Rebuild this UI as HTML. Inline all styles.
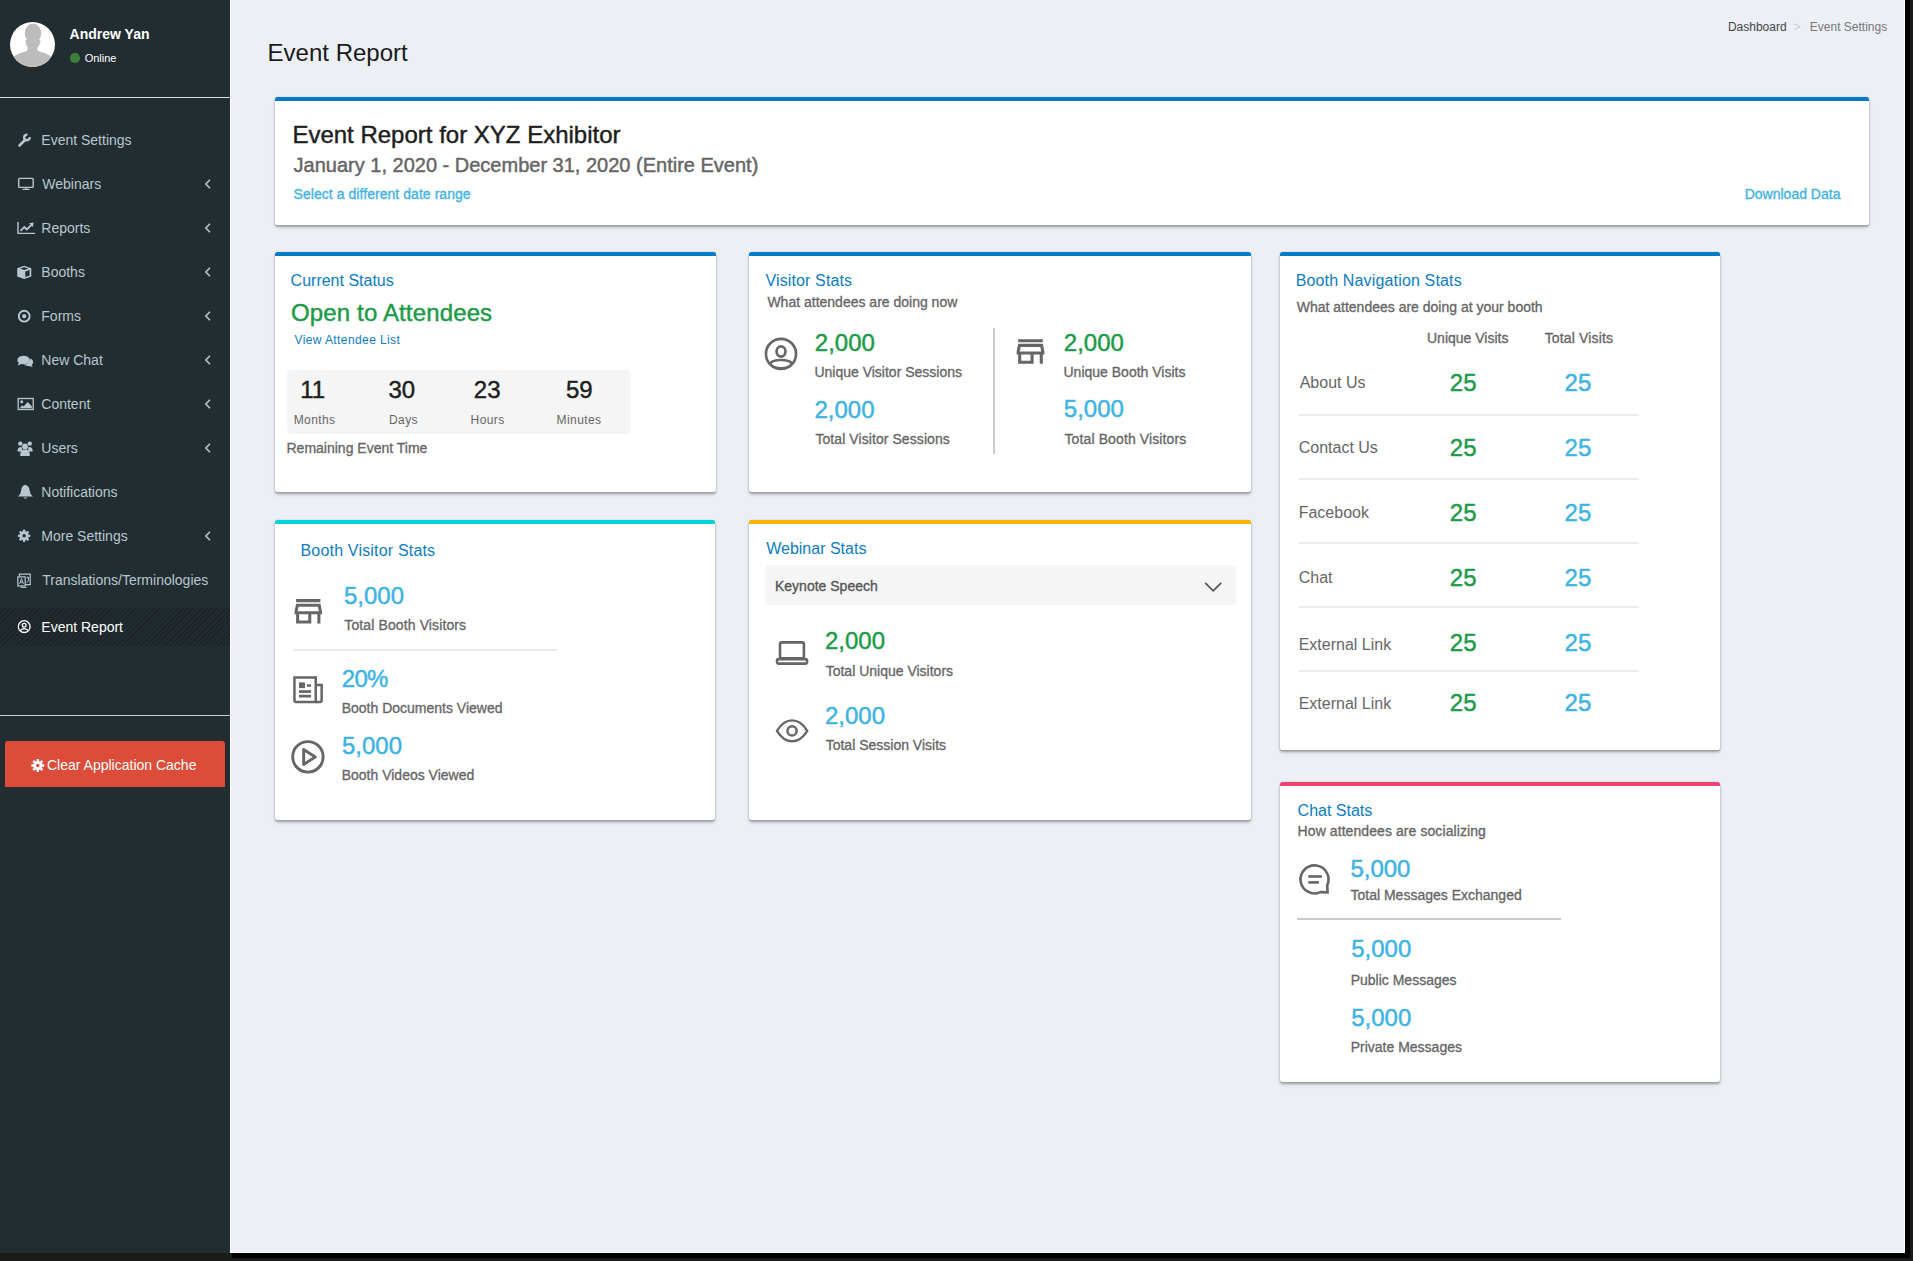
<!DOCTYPE html><html><head><meta charset="utf-8"><title>Event Report</title><style>
html,body{margin:0;padding:0;}
body{width:1913px;height:1261px;overflow:hidden;position:relative;background:#ecf0f5;font-family:"Liberation Sans", sans-serif;}
.t{position:absolute;line-height:1;white-space:nowrap;}
.card{position:absolute;box-sizing:border-box;background:#fff;border-top:4px solid #007bc7;border-radius:2.5px;box-shadow:0 2px 2px rgba(0,0,0,.24),0 3px 4px rgba(0,0,0,.10),0 0 2px rgba(0,0,0,.16);}
.sb{position:absolute;left:0;top:0;width:230px;height:1253px;background:#222d32;}
.ln{position:absolute;}
</style></head><body>
<div class="sb"></div>
<div class="ln" style="left:0;top:97px;width:230px;height:1px;background:#d9dcde"></div>
<div class="ln" style="left:0;top:608px;width:230px;height:38px;background:repeating-linear-gradient(135deg,#1b2327 0 1.2px,#222b30 1.2px 3.4px)"></div>
<div class="ln" style="left:0;top:715px;width:230px;height:1px;background:#c9cbcd"></div>
<div class="ln" style="left:5px;top:741px;width:220px;height:46px;background:#dd4b39;border-radius:3px 3px 0 0"></div>
<div class="ln" style="left:230px;top:0;width:1px;height:1253px;background:#ffffff"></div>
<div class="ln" style="left:230px;top:1252px;width:1675px;height:1px;background:#ffffff"></div>
<div class="ln" style="left:1904px;top:0;width:1px;height:1253px;background:#ffffff"></div>
<div class="ln" style="left:1905px;top:0;width:8px;height:1261px;background:#1a1a1a"></div>
<div class="ln" style="left:1905px;top:0;width:5px;height:1258px;background:#000"></div>
<div class="ln" style="left:0;top:1253px;width:1913px;height:8px;background:#1a1a1a"></div>
<div class="ln" style="left:232px;top:1253px;width:1678px;height:5px;background:#000"></div>
<svg style="position:absolute;left:10px;top:22px;width:45px;height:45px" viewBox="0 0 45 45"><defs><clipPath id="av"><circle cx="22.5" cy="22.5" r="22.5"/></clipPath></defs><circle cx="22.5" cy="22.5" r="22.5" fill="#ffffff"/><g clip-path="url(#av)" fill="#bcbcbc"><ellipse cx="23" cy="11.5" rx="8.2" ry="10"/><path d="M15.5 18 Q16 24 18 26 L17 29 Q8 31 3 35 L0 45 L45 45 L42 35 Q37 31 28 29 L27 26 Q30 24 30.5 18 Z"/></g></svg>
<div class="ln" style="left:70px;top:53px;width:9.5px;height:9.5px;border-radius:50%;background:#3d7e3d"></div>
<svg style="position:absolute;left:16px;top:132px;width:18px;height:16px;overflow:visible" viewBox="0 0 18 16"><g fill="none" stroke="#b8c7ce"><line x1="3.5" y1="13.5" x2="9" y2="8" stroke-width="2.6" stroke-linecap="round"/><path d="M13.7 5.1 A2.8 2.8 0 1 1 11.4 2.7" stroke-width="2.4"/></g></svg>
<svg style="position:absolute;left:16px;top:176px;width:20px;height:16px;overflow:visible" viewBox="0 0 20 16"><g fill="none" stroke="#b8c7ce"><rect x="2.7" y="2.4" width="14.5" height="9" rx="0.8" stroke-width="1.4"/><line x1="10" y1="11.5" x2="10" y2="13" stroke-width="1.2"/><line x1="6.5" y1="13.4" x2="13.6" y2="13.4" stroke-width="1.2"/></g></svg>
<svg style="position:absolute;left:16px;top:221px;width:20px;height:14px;overflow:visible" viewBox="0 0 20 14"><g fill="none" stroke="#b8c7ce" stroke-width="1.4"><polyline points="2,1 2,12.4 19,12.4"/><polyline points="4.5,9.8 8.3,6 10.8,8.5 16.2,3.2" stroke-width="1.8"/></g><path d="M13 2.3 L17.6 1.6 L17 6.1 Z" fill="#b8c7ce"/></svg>
<svg style="position:absolute;left:16px;top:265px;width:17px;height:15px;overflow:visible" viewBox="0 0 17 15"><path d="M8.2 0.8 L15.3 3.3 L15.3 11.4 L8.2 13.9 L1.2 11.4 L1.2 3.3 Z" fill="#b8c7ce"/><path d="M4.2 3.6 L8.2 2.2 L12.3 3.6 L8.2 5 Z" fill="#222d32"/><path d="M9.3 6.5 L13.6 5 L13.6 10.6 L9.3 12.1 Z" fill="#222d32"/></svg>
<svg style="position:absolute;left:16px;top:309.7px;width:17px;height:13px;overflow:visible" viewBox="0 0 17 13"><circle cx="8.2" cy="6.2" r="5.4" fill="none" stroke="#b8c7ce" stroke-width="1.9"/><circle cx="8.2" cy="6.2" r="2.1" fill="#b8c7ce"/></svg>
<svg style="position:absolute;left:16px;top:354.7px;width:18px;height:13px;overflow:visible" viewBox="0 0 18 13"><ellipse cx="7.6" cy="5" rx="6.3" ry="4.3" fill="#b8c7ce"/><path d="M3 7.5 L1.6 10.5 L6 8.8Z" fill="#b8c7ce"/><path d="M14.4 3.6 Q17.4 5 17.1 7.6 Q16.9 9.4 15.6 10.2 L16.8 12 L12.6 10.9 Q9.6 11 7.6 9.8 Q13 9.6 14.4 3.6Z" fill="#b8c7ce"/></svg>
<svg style="position:absolute;left:16px;top:397px;width:20px;height:14px;overflow:visible" viewBox="0 0 20 14"><rect x="2.2" y="1.5" width="15" height="11" fill="none" stroke="#b8c7ce" stroke-width="1.3"/><circle cx="5.7" cy="4.8" r="1.5" fill="#b8c7ce"/><path d="M3.5 11.2 L6.4 8.2 L7.6 9.4 L11.6 5 L15.8 9.2 L15.8 11.2Z" fill="#b8c7ce"/></svg>
<svg style="position:absolute;left:16px;top:440.5px;width:18px;height:15px;overflow:visible" viewBox="0 0 18 15"><g fill="#b8c7ce"><circle cx="4.3" cy="2.6" r="2.2"/><circle cx="13.8" cy="2.6" r="2.2"/><circle cx="9" cy="5.4" r="2.9"/><path d="M1.5 10.5 Q1.5 6.8 3.6 6.2 L6.3 6.2 Q5.6 8 6 10.5Z"/><path d="M16.7 10.5 Q16.7 6.8 14.6 6.2 L11.9 6.2 Q12.6 8 12.2 10.5Z"/><path d="M4.2 15 Q4.2 9 7 8.6 L11 8.6 Q13.8 9 13.8 15Z"/></g></svg>
<svg style="position:absolute;left:17px;top:484.3px;width:17px;height:15px;overflow:visible" viewBox="0 0 17 15"><path d="M8 0.8 Q12 1.6 12.6 6.2 Q12.8 10 15.9 12.6 L0.9 12.6 Q4 10 4.2 6.2 Q4.8 1.6 8 0.8Z M6.4 13.4 Q8.4 15.8 10.4 13.4Z" fill="#b8c7ce"/></svg>
<svg style="position:absolute;left:16px;top:529.1px;width:16px;height:14px;overflow:visible" viewBox="0 0 16 14"><g fill="#b8c7ce"><rect x="6.95" y="0.6" width="2.3" height="12.4" rx="0.4" transform="rotate(0 8.1 6.8)"/><rect x="6.95" y="0.6" width="2.3" height="12.4" rx="0.4" transform="rotate(45 8.1 6.8)"/><rect x="6.95" y="0.6" width="2.3" height="12.4" rx="0.4" transform="rotate(90 8.1 6.8)"/><rect x="6.95" y="0.6" width="2.3" height="12.4" rx="0.4" transform="rotate(135 8.1 6.8)"/><circle cx="8.1" cy="6.8" r="4.7"/></g><circle cx="8.1" cy="6.8" r="1.7" fill="#222d32"/></svg>
<svg style="position:absolute;left:16px;top:572.5px;width:16px;height:15px;overflow:visible" viewBox="0 0 16 15"><g fill="none" stroke="#b8c7ce" stroke-width="1.2"><path d="M3.4 3.6 V1.2 H14.2 V11.6 H9"/><rect x="1.8" y="3.9" width="7.4" height="9"/><path d="M3.6 11 L5.5 5.6 L7.4 11 M4.3 9.2 H6.7" stroke-width="1"/><path d="M10.6 4.6 H13 M11.8 3.6 V4.6 M10.8 9.6 Q13 8 12.6 5" stroke-width="1"/><path d="M4.8 13.2 V14.4 H10.6" stroke-width="1"/></g></svg>
<svg style="position:absolute;left:16px;top:620.3px;width:17px;height:14px;overflow:visible" viewBox="0 0 17 14"><circle cx="8.2" cy="6.6" r="5.9" fill="none" stroke="#ffffff" stroke-width="1.3"/><circle cx="8.2" cy="5.2" r="1.9" fill="none" stroke="#ffffff" stroke-width="1.3"/><path d="M4.2 10.6 Q8.2 6.6 12.2 10.6" fill="none" stroke="#ffffff" stroke-width="1.3"/></svg>
<svg style="position:absolute;left:203px;top:178.3px;width:10px;height:12px" viewBox="0 0 10 12"><polyline points="7,1.8 2.8,6 7,10.2" fill="none" stroke="#b8c7ce" stroke-width="1.6"/></svg>
<svg style="position:absolute;left:203px;top:222.3px;width:10px;height:12px" viewBox="0 0 10 12"><polyline points="7,1.8 2.8,6 7,10.2" fill="none" stroke="#b8c7ce" stroke-width="1.6"/></svg>
<svg style="position:absolute;left:203px;top:266.3px;width:10px;height:12px" viewBox="0 0 10 12"><polyline points="7,1.8 2.8,6 7,10.2" fill="none" stroke="#b8c7ce" stroke-width="1.6"/></svg>
<svg style="position:absolute;left:203px;top:310.3px;width:10px;height:12px" viewBox="0 0 10 12"><polyline points="7,1.8 2.8,6 7,10.2" fill="none" stroke="#b8c7ce" stroke-width="1.6"/></svg>
<svg style="position:absolute;left:203px;top:354.3px;width:10px;height:12px" viewBox="0 0 10 12"><polyline points="7,1.8 2.8,6 7,10.2" fill="none" stroke="#b8c7ce" stroke-width="1.6"/></svg>
<svg style="position:absolute;left:203px;top:398.3px;width:10px;height:12px" viewBox="0 0 10 12"><polyline points="7,1.8 2.8,6 7,10.2" fill="none" stroke="#b8c7ce" stroke-width="1.6"/></svg>
<svg style="position:absolute;left:203px;top:442.3px;width:10px;height:12px" viewBox="0 0 10 12"><polyline points="7,1.8 2.8,6 7,10.2" fill="none" stroke="#b8c7ce" stroke-width="1.6"/></svg>
<svg style="position:absolute;left:203px;top:530.3px;width:10px;height:12px" viewBox="0 0 10 12"><polyline points="7,1.8 2.8,6 7,10.2" fill="none" stroke="#b8c7ce" stroke-width="1.6"/></svg>
<svg style="position:absolute;left:31px;top:758.5px;width:14px;height:13px" viewBox="0 0 14 13"><g fill="#fff"><rect x="5.6" y="0" width="2.4" height="13" rx="0.3" transform="rotate(0 6.8 6.5)"/><rect x="5.6" y="0" width="2.4" height="13" rx="0.3" transform="rotate(45 6.8 6.5)"/><rect x="5.6" y="0" width="2.4" height="13" rx="0.3" transform="rotate(90 6.8 6.5)"/><rect x="5.6" y="0" width="2.4" height="13" rx="0.3" transform="rotate(135 6.8 6.5)"/><circle cx="6.8" cy="6.5" r="4.6"/></g><circle cx="6.8" cy="6.5" r="1.7" fill="#dd4b39"/></svg>
<div class="card" style="left:275px;top:97px;width:1594px;height:128px;border-top-color:#007bc7"></div>
<div class="card" style="left:275px;top:252px;width:441px;height:240px;border-top-color:#007bc7"></div>
<div class="card" style="left:749px;top:252px;width:502px;height:240px;border-top-color:#007bc7"></div>
<div class="card" style="left:1280px;top:252px;width:440px;height:498px;border-top-color:#007bc7"></div>
<div class="card" style="left:275px;top:520px;width:440px;height:300px;border-top-color:#00d2df"></div>
<div class="card" style="left:749px;top:520px;width:502px;height:300px;border-top-color:#ffb300"></div>
<div class="card" style="left:1280px;top:782px;width:440px;height:300px;border-top-color:#ec4471"></div>
<div class="ln" style="left:287px;top:370px;width:344px;height:64px;background:#f5f5f5;border-radius:4px"></div>
<div class="ln" style="left:993px;top:328px;width:2px;height:126px;background:#c9cdd1"></div>
<div class="ln" style="left:1299px;top:414px;width:340px;height:2px;background:#ececec"></div>
<div class="ln" style="left:1299px;top:478px;width:340px;height:2px;background:#ececec"></div>
<div class="ln" style="left:1299px;top:542px;width:340px;height:2px;background:#ececec"></div>
<div class="ln" style="left:1299px;top:606px;width:340px;height:2px;background:#ececec"></div>
<div class="ln" style="left:1299px;top:670px;width:340px;height:2px;background:#ececec"></div>
<div class="ln" style="left:293px;top:649px;width:264px;height:2px;background:#ebeced"></div>
<div class="ln" style="left:1297px;top:918px;width:264px;height:2px;background:#c8cacd"></div>
<div class="ln" style="left:765px;top:565px;width:471px;height:40px;background:#f5f5f5;border-radius:4px"></div>
<svg style="position:absolute;left:1202px;top:578.8px;width:22px;height:16px" viewBox="0 0 22 16"><polyline points="3.2,3.8 11.2,11.8 19.2,3.8" fill="none" stroke="#555" stroke-width="1.75"/></svg>
<svg style="position:absolute;left:758px;top:332px;width:46px;height:46px" viewBox="0 0 46 46"><defs><clipPath id="acc"><circle cx="23" cy="21.9" r="15"/></clipPath></defs><g fill="none" stroke="#666666"><circle cx="23" cy="21.9" r="15.05" stroke-width="2.6"/><ellipse cx="23" cy="19.5" rx="4.45" ry="5.05" stroke-width="2.7"/><ellipse cx="23" cy="32.1" rx="10.9" ry="4.2" stroke-width="2.5" clip-path="url(#acc)"/></g></svg>
<svg style="position:absolute;left:1011.5px;top:333px;width:37px;height:37px;" viewBox="0 0 24 24" fill="#666666"><path d="M18.36 9l.6 3H5.04l.6-3h12.72M20 4H4v2h16V4zm0 3H4l-1 5v2h1v6h10v-6h4v6h2v-6h1v-2l-1-5zM6 18v-4h6v4H6z"/></svg>
<svg style="position:absolute;left:290px;top:593px;width:36.5px;height:36.5px;" viewBox="0 0 24 24" fill="#666666"><path d="M18.36 9l.6 3H5.04l.6-3h12.72M20 4H4v2h16V4zm0 3H4l-1 5v2h1v6h10v-6h4v6h2v-6h1v-2l-1-5zM6 18v-4h6v4H6z"/></svg>
<svg style="position:absolute;left:288px;top:737px;width:40px;height:40px" viewBox="0 0 40 40"><g fill="none" stroke="#666666"><circle cx="19.9" cy="19.85" r="15.25" stroke-width="2.9"/><path d="M15.65 12.45 L27.25 19.95 L15.65 27.45 Z" stroke-width="2.9" stroke-linejoin="round"/></g></svg>
<svg style="position:absolute;left:770px;top:710px;width:44px;height:40px" viewBox="0 0 44 40"><g fill="none" stroke="#666666"><path d="M6.9 20.85 C11 14.2 16 10.4 22.1 10.4 C28.2 10.4 33.2 14.2 37.3 20.85 C33.2 27.5 28.2 31.3 22.1 31.3 C16 31.3 11 27.5 6.9 20.85Z" stroke-width="2.4" stroke-linejoin="round"/><circle cx="22.05" cy="20.95" r="4.6" stroke-width="2.5"/></g></svg>
<svg style="position:absolute;left:770px;top:636px;width:45px;height:35px" viewBox="0 0 45 35"><g fill="none" stroke="#666666" stroke-width="2.6"><rect x="10" y="6.4" width="23.9" height="16" rx="1.8"/><rect x="7" y="23.1" width="30.1" height="4.5" rx="1.8"/></g></svg>
<svg style="position:absolute;left:1295px;top:860px;width:40px;height:40px" viewBox="0 0 40 40"><path d="M25.4 32.1 A14 14 0 1 1 32.2 25.3 L32.6 32.4 Z" fill="none" stroke="#666666" stroke-width="2.6" stroke-linejoin="miter"/><rect x="13.3" y="15.2" width="13.6" height="2.6" fill="#666666"/><rect x="13.3" y="21.1" width="10.6" height="2.6" fill="#666666"/></svg>
<svg style="position:absolute;left:290px;top:672px;width:36px;height:36px" viewBox="0 0 36 36"><g fill="none" stroke="#666666" stroke-width="2.5"><path d="M4.45 5.55 H25.75 V30.05 H6.2 Q4.45 30.05 4.45 28.3 Z"/><path d="M25.75 13.05 H31.65 V28.3 Q31.65 30.05 29.9 30.05 H25.75"/></g><g fill="#666666"><rect x="9" y="10.4" width="6" height="5.7"/><rect x="16.9" y="12.3" width="4.1" height="2.5"/><rect x="9" y="18.2" width="12.1" height="2.7"/><rect x="9" y="22.8" width="12.1" height="2.7"/></g></svg>
<div class="t" style="left:69.6px;top:26.8px;font-size:14px;font-weight:700;color:#ffffff;">Andrew Yan</div>
<div class="t" style="left:84.7px;top:52.8px;font-size:11px;color:#ffffff;">Online</div>
<div class="t" style="left:41.3px;top:133px;font-size:14px;color:#b8c7ce;">Event Settings</div>
<div class="t" style="left:42.3px;top:177px;font-size:14px;color:#b8c7ce;">Webinars</div>
<div class="t" style="left:41.3px;top:221px;font-size:14px;color:#b8c7ce;">Reports</div>
<div class="t" style="left:41.3px;top:265px;font-size:14px;color:#b8c7ce;">Booths</div>
<div class="t" style="left:41.3px;top:309px;font-size:14px;color:#b8c7ce;">Forms</div>
<div class="t" style="left:41.3px;top:353px;font-size:14px;color:#b8c7ce;">New Chat</div>
<div class="t" style="left:41.3px;top:397px;font-size:14px;color:#b8c7ce;">Content</div>
<div class="t" style="left:41.3px;top:441px;font-size:14px;color:#b8c7ce;">Users</div>
<div class="t" style="left:41.3px;top:485px;font-size:14px;color:#b8c7ce;">Notifications</div>
<div class="t" style="left:41.3px;top:529px;font-size:14px;color:#b8c7ce;">More Settings</div>
<div class="t" style="left:42.3px;top:573px;font-size:14px;color:#b8c7ce;">Translations/Terminologies</div>
<div class="t" style="left:41.3px;top:620px;font-size:14px;color:#ffffff;">Event Report</div>
<div class="t" style="left:47px;top:757.7px;font-size:14px;color:#ffffff;">Clear Application Cache</div>
<div class="t" style="left:1727.9px;top:20.8px;font-size:12px;color:#444444;">Dashboard</div>
<div class="t" style="left:1793.8px;top:20.8px;font-size:12px;color:#cccccc;">></div>
<div class="t" style="left:1809.8px;top:20.8px;font-size:12px;color:#777777;">Event Settings</div>
<div class="t" style="left:267.6px;top:41.1px;font-size:24px;color:#1a1a1a;">Event Report</div>
<div class="t" style="left:292.4px;top:123px;font-size:24px;-webkit-text-stroke:0.45px #1e1e1e;color:#1e1e1e;">Event Report for XYZ Exhibitor</div>
<div class="t" style="left:293.6px;top:155px;font-size:20px;-webkit-text-stroke:0.45px #666666;color:#666666;">January 1, 2020 - December 31, 2020 (Entire Event)</div>
<div class="t" style="left:293.6px;top:186.8px;font-size:14px;-webkit-text-stroke:0.32px #3cb3e4;color:#3cb3e4;letter-spacing:0.05px;">Select a different date range</div>
<div class="t" style="left:1744.7px;top:187.1px;font-size:14px;-webkit-text-stroke:0.32px #3cb3e4;color:#3cb3e4;">Download Data</div>
<div class="t" style="left:290.6px;top:272.8px;font-size:16px;color:#0b7dc2;">Current Status</div>
<div class="t" style="left:291px;top:300.9px;font-size:24px;-webkit-text-stroke:0.45px #1b9b47;color:#1b9b47;letter-spacing:0.144px;">Open to Attendees</div>
<div class="t" style="left:294.5px;top:334.1px;font-size:12px;color:#0b7dc2;letter-spacing:0.4px;">View Attendee List</div>
<div class="t" style="left:300.2px;top:378px;font-size:24px;-webkit-text-stroke:0.45px #1e1e1e;color:#1e1e1e;">11</div>
<div class="t" style="left:388.5px;top:378px;font-size:24px;-webkit-text-stroke:0.45px #1e1e1e;color:#1e1e1e;">30</div>
<div class="t" style="left:473.8px;top:378px;font-size:24px;-webkit-text-stroke:0.45px #1e1e1e;color:#1e1e1e;">23</div>
<div class="t" style="left:566px;top:378px;font-size:24px;-webkit-text-stroke:0.45px #1e1e1e;color:#1e1e1e;">59</div>
<div class="t" style="left:293.7px;top:414px;font-size:12px;color:#666666;letter-spacing:0.4px;">Months</div>
<div class="t" style="left:389px;top:414px;font-size:12px;color:#666666;letter-spacing:0.4px;">Days</div>
<div class="t" style="left:470.6px;top:414px;font-size:12px;color:#666666;letter-spacing:0.4px;">Hours</div>
<div class="t" style="left:556.6px;top:414px;font-size:12px;color:#666666;letter-spacing:0.4px;">Minutes</div>
<div class="t" style="left:286.5px;top:440.6px;font-size:14px;-webkit-text-stroke:0.32px #666666;color:#666666;">Remaining Event Time</div>
<div class="t" style="left:765.5px;top:273.1px;font-size:16px;color:#0b7dc2;letter-spacing:0.125px;">Visitor Stats</div>
<div class="t" style="left:767.4px;top:294.7px;font-size:14px;-webkit-text-stroke:0.32px #666666;color:#666666;">What attendees are doing now</div>
<div class="t" style="left:814.8px;top:330.8px;font-size:24px;-webkit-text-stroke:0.45px #1b9b47;color:#1b9b47;">2,000</div>
<div class="t" style="left:814.4px;top:364.7px;font-size:14px;-webkit-text-stroke:0.32px #666666;color:#666666;">Unique Visitor Sessions</div>
<div class="t" style="left:814.5px;top:398px;font-size:24px;-webkit-text-stroke:0.45px #3cb3e4;color:#3cb3e4;">2,000</div>
<div class="t" style="left:815.4px;top:432.2px;font-size:14px;-webkit-text-stroke:0.32px #666666;color:#666666;letter-spacing:0.076px;">Total Visitor Sessions</div>
<div class="t" style="left:1063.8px;top:331.1px;font-size:24px;-webkit-text-stroke:0.45px #1b9b47;color:#1b9b47;">2,000</div>
<div class="t" style="left:1063.5px;top:364.8px;font-size:14px;-webkit-text-stroke:0.32px #666666;color:#666666;">Unique Booth Visits</div>
<div class="t" style="left:1063.8px;top:397.4px;font-size:24px;-webkit-text-stroke:0.45px #3cb3e4;color:#3cb3e4;">5,000</div>
<div class="t" style="left:1064.5px;top:431.5px;font-size:14px;-webkit-text-stroke:0.32px #666666;color:#666666;letter-spacing:0.116px;">Total Booth Visitors</div>
<div class="t" style="left:1295.7px;top:273.3px;font-size:16px;color:#0b7dc2;letter-spacing:0.152px;">Booth Navigation Stats</div>
<div class="t" style="left:1296.7px;top:300px;font-size:14px;-webkit-text-stroke:0.32px #666666;color:#666666;">What attendees are doing at your booth</div>
<div class="t" style="left:1427px;top:330.7px;font-size:14px;-webkit-text-stroke:0.32px #666666;color:#666666;">Unique Visits</div>
<div class="t" style="left:1544.7px;top:330.7px;font-size:14px;-webkit-text-stroke:0.32px #666666;color:#666666;letter-spacing:0.155px;">Total Visits</div>
<div class="t" style="left:1299.7px;top:375.3px;font-size:16px;color:#666666;">About Us</div>
<div class="t" style="left:1449.8px;top:371px;font-size:24px;-webkit-text-stroke:0.45px #1b9b47;color:#1b9b47;">25</div>
<div class="t" style="left:1564.6px;top:371px;font-size:24px;-webkit-text-stroke:0.45px #3cb3e4;color:#3cb3e4;">25</div>
<div class="t" style="left:1298.7px;top:440.1px;font-size:16px;color:#666666;">Contact Us</div>
<div class="t" style="left:1449.8px;top:436px;font-size:24px;-webkit-text-stroke:0.45px #1b9b47;color:#1b9b47;">25</div>
<div class="t" style="left:1564.6px;top:436px;font-size:24px;-webkit-text-stroke:0.45px #3cb3e4;color:#3cb3e4;">25</div>
<div class="t" style="left:1298.7px;top:504.9px;font-size:16px;color:#666666;">Facebook</div>
<div class="t" style="left:1449.8px;top:500.9px;font-size:24px;-webkit-text-stroke:0.45px #1b9b47;color:#1b9b47;">25</div>
<div class="t" style="left:1564.6px;top:500.9px;font-size:24px;-webkit-text-stroke:0.45px #3cb3e4;color:#3cb3e4;">25</div>
<div class="t" style="left:1298.7px;top:569.8px;font-size:16px;color:#666666;">Chat</div>
<div class="t" style="left:1449.8px;top:565.8px;font-size:24px;-webkit-text-stroke:0.45px #1b9b47;color:#1b9b47;">25</div>
<div class="t" style="left:1564.6px;top:565.8px;font-size:24px;-webkit-text-stroke:0.45px #3cb3e4;color:#3cb3e4;">25</div>
<div class="t" style="left:1298.7px;top:636.6px;font-size:16px;color:#666666;">External Link</div>
<div class="t" style="left:1449.8px;top:631.1px;font-size:24px;-webkit-text-stroke:0.45px #1b9b47;color:#1b9b47;">25</div>
<div class="t" style="left:1564.6px;top:631.1px;font-size:24px;-webkit-text-stroke:0.45px #3cb3e4;color:#3cb3e4;">25</div>
<div class="t" style="left:1298.7px;top:696.4px;font-size:16px;color:#666666;">External Link</div>
<div class="t" style="left:1449.8px;top:691.1px;font-size:24px;-webkit-text-stroke:0.45px #1b9b47;color:#1b9b47;">25</div>
<div class="t" style="left:1564.6px;top:691.1px;font-size:24px;-webkit-text-stroke:0.45px #3cb3e4;color:#3cb3e4;">25</div>
<div class="t" style="left:300.5px;top:543.2px;font-size:16px;color:#0b7dc2;letter-spacing:0.183px;">Booth Visitor Stats</div>
<div class="t" style="left:344px;top:583.8px;font-size:24px;-webkit-text-stroke:0.45px #3cb3e4;color:#3cb3e4;">5,000</div>
<div class="t" style="left:344.3px;top:618.1px;font-size:14px;-webkit-text-stroke:0.32px #666666;color:#666666;letter-spacing:0.116px;">Total Booth Visitors</div>
<div class="t" style="left:341.7px;top:667px;font-size:24px;-webkit-text-stroke:0.45px #3cb3e4;color:#3cb3e4;letter-spacing:-0.65px;">20%</div>
<div class="t" style="left:341.7px;top:700.7px;font-size:14px;-webkit-text-stroke:0.32px #666666;color:#666666;">Booth Documents Viewed</div>
<div class="t" style="left:342px;top:733.8px;font-size:24px;-webkit-text-stroke:0.45px #3cb3e4;color:#3cb3e4;">5,000</div>
<div class="t" style="left:341.7px;top:767.8px;font-size:14px;-webkit-text-stroke:0.32px #666666;color:#666666;">Booth Videos Viewed</div>
<div class="t" style="left:766.2px;top:540.7px;font-size:16px;color:#0b7dc2;">Webinar Stats</div>
<div class="t" style="left:775px;top:578.7px;font-size:14px;-webkit-text-stroke:0.32px #555555;color:#555555;">Keynote Speech</div>
<div class="t" style="left:825px;top:629.2px;font-size:24px;-webkit-text-stroke:0.45px #1b9b47;color:#1b9b47;">2,000</div>
<div class="t" style="left:825.7px;top:664px;font-size:14px;-webkit-text-stroke:0.32px #666666;color:#666666;">Total Unique Visitors</div>
<div class="t" style="left:825px;top:703.6px;font-size:24px;-webkit-text-stroke:0.45px #3cb3e4;color:#3cb3e4;">2,000</div>
<div class="t" style="left:825.7px;top:738px;font-size:14px;-webkit-text-stroke:0.32px #666666;color:#666666;">Total Session Visits</div>
<div class="t" style="left:1297.6px;top:802.8px;font-size:16px;color:#0b7dc2;">Chat Stats</div>
<div class="t" style="left:1297.6px;top:823.9px;font-size:14px;-webkit-text-stroke:0.32px #666666;color:#666666;letter-spacing:0.079px;">How attendees are socializing</div>
<div class="t" style="left:1350.4px;top:856.9px;font-size:24px;-webkit-text-stroke:0.45px #3cb3e4;color:#3cb3e4;">5,000</div>
<div class="t" style="left:1350.5px;top:887.6px;font-size:14px;-webkit-text-stroke:0.32px #666666;color:#666666;">Total Messages Exchanged</div>
<div class="t" style="left:1351.2px;top:937px;font-size:24px;-webkit-text-stroke:0.45px #3cb3e4;color:#3cb3e4;">5,000</div>
<div class="t" style="left:1350.7px;top:973px;font-size:14px;-webkit-text-stroke:0.32px #666666;color:#666666;">Public Messages</div>
<div class="t" style="left:1351.2px;top:1006px;font-size:24px;-webkit-text-stroke:0.45px #3cb3e4;color:#3cb3e4;">5,000</div>
<div class="t" style="left:1350.7px;top:1039.6px;font-size:14px;-webkit-text-stroke:0.32px #666666;color:#666666;">Private Messages</div>
</body></html>
